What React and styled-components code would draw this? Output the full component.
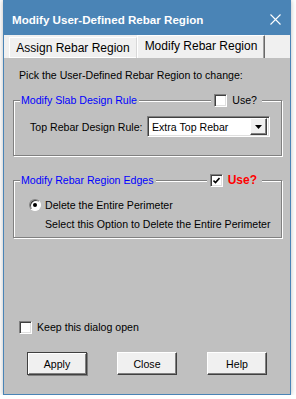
import React from 'react';
import styled, { createGlobalStyle } from 'styled-components';

const GlobalStyle = createGlobalStyle`
  html, body {
    margin: 0;
    padding: 0;
    background: #fff;
  }
  body {
    font-family: "Liberation Sans", Arial, sans-serif;
  }
  * { box-sizing: border-box; }
`;

const Window = styled.div`
  width: 288px;
  height: 395px;
  margin-left: 3px;
  border: 1px solid #4a84b6;
  border-top: none;
  display: flex;
  flex-direction: column;
  box-shadow: 0 0 5px rgba(0, 0, 0, 0.28);
`;

const TitleBar = styled.div`
  height: 35px;
  flex-shrink: 0;
  margin: 0 -1px;
  padding: 4px 10px 0 9px;
  background: #4a84b6;
  display: flex;
  align-items: center;
  justify-content: space-between;
  color: #fff;
  font-size: 11.6px;
  font-weight: bold;
`;

const TabStrip = styled.div`
  height: 23px;
  flex-shrink: 0;
  background: #f0f0f0;
  display: flex;
  align-items: flex-end;
  padding-left: 5px;
`;

const Tab = styled.div`
  width: 128px;
  height: ${p => (p.$active ? 23 : 21)}px;
  display: flex;
  align-items: center;
  justify-content: center;
  padding-bottom: ${p => (p.$active ? 2 : 0)}px;
  font-size: 12px;
  color: #000;
  background: #f0f0f0;
  border-top: 1px solid #fff;
  border-left: 1px solid #fff;
  border-right: 1px solid ${p => (p.$active ? '#696969' : '#d8d8d8')};
  box-shadow: ${p => (p.$active ? 'inset -1px 0 0 #a0a0a0' : 'inset 0 -1px 0 #fff')};
`;

const Content = styled.div`
  flex: 1;
  background: #c0c0c0;
  display: flex;
  flex-direction: column;
  padding: 0 8px 19px 9px;
  font-size: 10.6px;
  line-height: 14px;
  color: #000;
`;

const Instruction = styled.div`
  margin: 10px 0 0 6px;
`;

const Group = styled.div`
  margin-top: ${p => p.$top}px;
  padding-bottom: ${p => p.$bottom}px;
  border: 1px solid #808080;
  box-shadow: inset 1px 1px 0 #fff, 1px 1px 0 #fff;
`;

const GroupHeader = styled.div`
  margin-top: -8px;
  height: 14px;
  display: flex;
  justify-content: space-between;
  padding: 0 19px 0 6px;
`;

const GroupLabel = styled.span`
  background: #c0c0c0;
  padding: 0 2px 0 1px;
  color: #0000ff;
`;

const UseBox = styled.label`
  background: #c0c0c0;
  display: flex;
  align-items: center;
  gap: 5px;
  padding: 0 5px 0 3px;
`;

const UseText = styled.span`
  color: ${p => (p.$on ? '#ff0000' : '#000')};
  font-weight: ${p => (p.$on ? 'bold' : 'normal')};
  font-size: ${p => (p.$on ? '12px' : '10.6px')};
`;

const Box = styled.span`
  width: 13px;
  height: 13px;
  flex-shrink: 0;
  background: #fff;
  border: 1px solid;
  border-color: #808080 #fff #fff #808080;
  box-shadow: inset 1px 1px 0 #404040, inset -1px -1px 0 #dfdfdf;
  display: flex;
  align-items: center;
  justify-content: center;
`;

const RuleRow = styled.div`
  margin-top: 9px;
  display: flex;
  align-items: center;
  justify-content: space-between;
  padding: 0 11px 0 16px;
`;

const Select = styled.div`
  width: 123px;
  height: 21px;
  background: #fff;
  border: 1px solid;
  border-color: #808080 #fff #fff #808080;
  box-shadow: inset 1px 1px 0 #404040, inset -1px -1px 0 #dfdfdf;
  display: flex;
  align-items: center;
  justify-content: space-between;
  padding: 1px 2px 1px 4px;
`;

const SelectButton = styled.span`
  width: 17px;
  height: 17px;
  background: #f0f0f0;
  border: 1px solid;
  border-color: #fff #404040 #404040 #fff;
  box-shadow: inset -1px -1px 0 #808080;
  display: flex;
  align-items: center;
  justify-content: center;
`;

const RadioRow = styled.label`
  margin-top: 11px;
  display: flex;
  align-items: center;
  gap: 4px;
  padding-left: 15px;
`;

const Radio = styled.span`
  width: 12px;
  height: 12px;
  border-radius: 50%;
  background: #fff;
  border: 1px solid;
  border-color: #808080 #fff #fff #808080;
  box-shadow: inset 1px 1px 0 #404040;
  display: flex;
  align-items: center;
  justify-content: center;
  &::after {
    content: '';
    width: 4px;
    height: 4px;
    border-radius: 50%;
    background: #000;
  }
`;

const Hint = styled.div`
  margin-top: 5px;
  padding-left: 31px;
`;

const KeepRow = styled.label`
  margin: auto 0 18px 6px;
  display: flex;
  align-items: center;
  gap: 5px;
`;

const ButtonRow = styled.div`
  display: flex;
  gap: 30px;
  padding-left: 14px;
`;

const Button = styled.button`
  width: 60px;
  height: 23px;
  padding: 0;
  font-family: inherit;
  font-size: 10.6px;
  color: #000;
  background: #f0f0f0;
  border: 1px solid;
  border-color: ${p => (p.$default ? '#404040' : '#fff #404040 #404040 #fff')};
  box-shadow: ${p =>
    p.$default
      ? 'inset 1px 1px 0 #fff, inset -1px -1px 0 #808080, 1px 1px 0 #808080'
      : 'inset -1px -1px 0 #808080'};
`;

function CheckBox({ checked }) {
  return (
    <Box>
      {checked && (
        <svg width="7" height="7" viewBox="0 0 7 7">
          <path d="M0.5 3.5 L2.5 5.5 L6.5 1" stroke="#000" strokeWidth="1.6" fill="none" />
        </svg>
      )}
    </Box>
  );
}

export default function App() {
  return (
    <>
      <GlobalStyle />
      <Window>
        <TitleBar>
          <span>Modify User-Defined Rebar Region</span>
          <svg width="11" height="11" viewBox="0 0 11 11">
            <path d="M0.5 0.5 L10.5 10.5 M10.5 0.5 L0.5 10.5" stroke="#fff" strokeWidth="1.1" />
          </svg>
        </TitleBar>
        <TabStrip>
          <Tab>Assign Rebar Region</Tab>
          <Tab $active>Modify Rebar Region</Tab>
        </TabStrip>
        <Content>
          <Instruction>Pick the User-Defined Rebar Region to change:</Instruction>

          <Group $top={18} $bottom={18}>
            <GroupHeader>
              <GroupLabel>Modify Slab Design Rule</GroupLabel>
              <UseBox>
                <CheckBox />
                <UseText>Use?</UseText>
              </UseBox>
            </GroupHeader>
            <RuleRow>
              <span>Top Rebar Design Rule:</span>
              <Select>
                <span>Extra Top Rebar</span>
                <SelectButton>
                  <svg width="7" height="4" viewBox="0 0 7 4">
                    <path d="M0 0 H7 L3.5 4 Z" fill="#000" />
                  </svg>
                </SelectButton>
              </Select>
            </RuleRow>
          </Group>

          <Group $top={24} $bottom={6}>
            <GroupHeader>
              <GroupLabel>Modify Rebar Region Edges</GroupLabel>
              <UseBox>
                <CheckBox checked />
                <UseText $on>Use?</UseText>
              </UseBox>
            </GroupHeader>
            <RadioRow>
              <Radio />
              <span>Delete the Entire Perimeter</span>
            </RadioRow>
            <Hint>Select this Option to Delete the Entire Perimeter</Hint>
          </Group>

          <KeepRow>
            <CheckBox />
            <span>Keep this dialog open</span>
          </KeepRow>

          <ButtonRow>
            <Button $default>Apply</Button>
            <Button>Close</Button>
            <Button>Help</Button>
          </ButtonRow>
        </Content>
      </Window>
    </>
  );
}
